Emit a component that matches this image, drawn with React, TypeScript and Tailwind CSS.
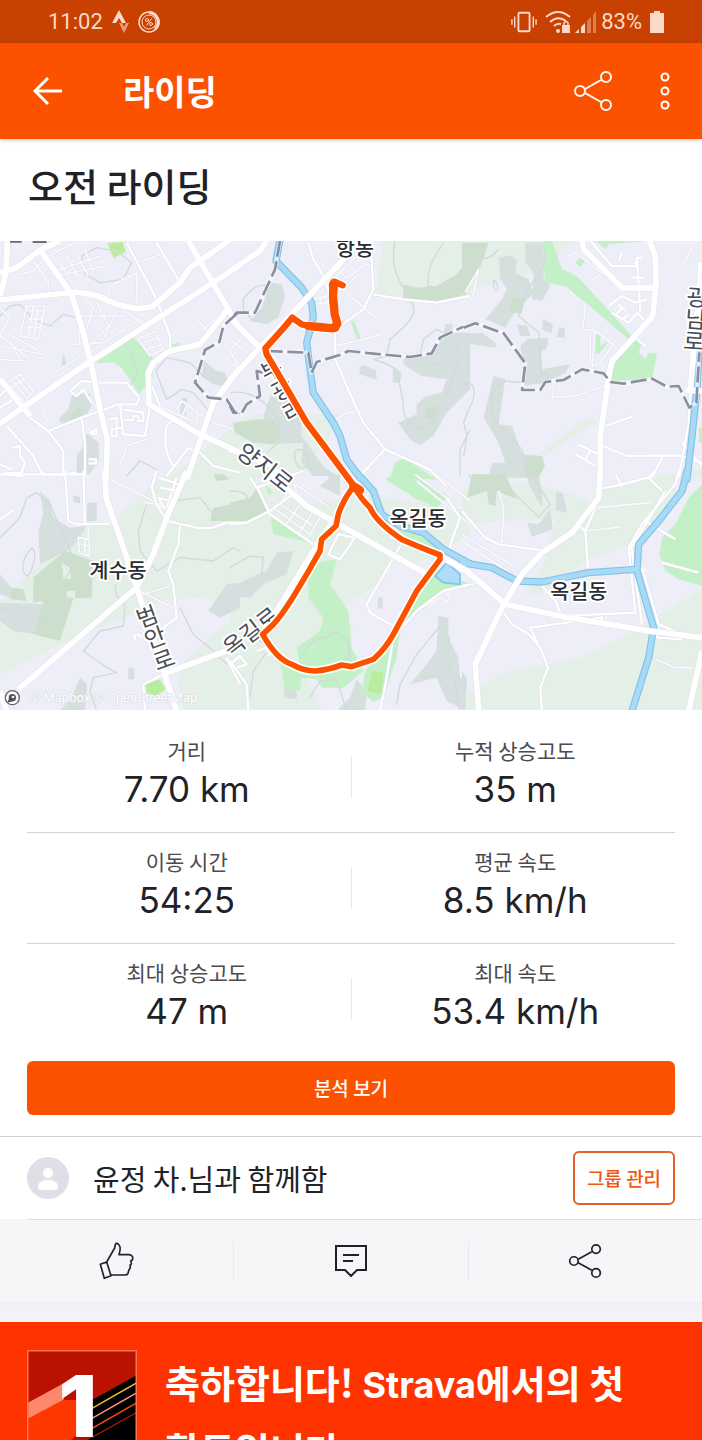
import React from 'react';

interface Sector {
  at: string;
  pale: string;
  woods: string;
  hills: string;
  clear?: string;
  parks: string;
  lime?: string;
  contours: string;
  streets: string;
  avenues: string;
  roads: string;
  water?: string;
  border?: string;
}

// Map tiles, three units per pixel
const sectors: Sector[] = [
  {
    at: 'translate(0 -15)',
    pale: 'M720 560L690 580L600 650L500 730H720Z',
    woods: 'M215 480L270 470L275 510L255 545L190 565L175 550L205 520ZM260 590L295 620L298 670L270 715L230 710L230 660L250 630ZM612 375L650 405L675 410L690 455L640 445L605 420ZM190 350L200 388L185 388ZM545 485L562 485L558 540L540 530Z',
    hills: 'M235 515L250 520L245 545L212 550L215 530Z',
    parks: 'M285 380L400 305L460 365L455 465L430 455L418 475L385 425L365 395L340 380ZM515 325L540 320L543 333L517 337Z',
    lime: 'M322 22L368 18L378 48L340 66Z',
    contours: 'M245 60L290 35L350 45L395 80L370 130L300 140L255 115ZM0 240L30 210L60 205L100 250L150 270L190 235L250 250M467 405L500 365L570 380L620 430M467 405L500 490L545 460L580 470L640 540M380 330L415 410L390 450M380 720L420 675L470 700',
    streets: 'M95 65L145 140V170M150 110L300 60M165 120L320 90M175 75L205 120M200 60L235 125M230 55L265 120M255 40L280 110M410 110L412 210M410 80L500 50M320 190L330 150L410 110M60 115L100 105L130 70L220 20M215 170L235 250L240 320M250 180L280 215L250 310M290 200L325 270L270 330M350 225L310 310M325 190L440 270M240 240L370 240M225 325L310 320L420 250M80 210L135 210L115 310L60 300ZM90 225H130M85 250H125M80 275H120M100 210L85 305M115 215L100 310M0 220L30 240L0 300M0 300L90 370M20 290L110 340M0 330L130 355M30 310L60 370M0 370L80 375M160 430L165 410L260 350M20 440L60 415L100 465L75 500ZM35 430L80 485M50 425L90 475M30 455L75 430M440 610L380 630L360 690M480 510L540 540M530 520L545 495L595 530L585 570M560 510L540 555M520 530L580 555M590 250L620 280M610 280L650 245M415 310L465 285L490 340L450 360ZM430 320L475 305M440 340L485 325M130 525L150 570M720 310L690 345L720 400M640 560L700 580',
    avenues: 'M380 20L470 190L510 300V345M470 20L540 140M0 480L20 460L40 490L0 515M20 460L0 440M210 465L245 435L290 440H380L418 485L410 505H355L245 545L145 585L90 545M210 465L230 480L250 460L275 500M145 585L190 645V720M60 520L0 570M20 570L100 660L130 720M245 550L255 620V720M270 590L290 580V595ZM265 670H288V682H265M0 715H190L230 710M360 505L370 595L435 600L450 510M370 520L430 530V555H415V540H400V552H375M330 550L350 545V600L335 602V580L370 575M35 635L60 630V660L75 680L65 710L10 712M0 685L35 700M455 450L480 510M500 570C490 620 500 660 520 690M500 570L520 550M560 635L600 650L640 690L720 710M500 720L565 635',
    roads: 'M0 192L230 168L290 178L350 205L410 218L455 213L540 140L570 95L690 12M0 562L265 380L720 88M120 42L215 175L250 290L275 390L300 520L322 610L318 730M0 110L50 95L120 42L180 15M22 10L18 110L0 180M565 15L720 280M680 225L640 275L600 325L510 345L460 380L445 410L447 505L590 590L720 650M720 395L640 500L560 730M0 430L90 540',
    border: 'M712 232L670 270L658 318L615 342L585 440L625 485L680 490L705 530L720 532',
  },
  {
    at: 'translate(690 -15)',
    pale: 'M460 15H720V180L680 190L440 175ZM90 535H330L300 600L200 725H0V560Z',
    woods: 'M120 140L155 145L165 180L145 245L110 265L60 255L95 215ZM388 392L400 387L438 403L440 432L390 415ZM488 395L515 410L510 440L488 440ZM645 265L665 262L672 290H720V460L650 530L610 600L570 628L540 610L505 560L560 535V505L590 480L635 470L650 430L575 420L520 385V365L600 350L640 300ZM125 470L170 480L210 530L215 600L280 690L320 720H250L215 680L220 620L120 625L100 540Z',
    hills: 'M520 145L560 155L620 150L680 115L720 60V150L700 190L620 200L520 190ZM10 560L85 550L130 550L155 590L130 625L70 620L15 590ZM595 510L620 512L612 550L588 545Z',
    parks: 'M495 680L520 665L620 730H480ZM362 258L372 253L395 315L385 318Z',
    contours: 'M495 15C480 80 500 130 540 190C570 230 540 260 480 310L470 360L430 370L460 380L500 400L520 500C510 560 580 590 600 570L650 480L690 350L660 300L620 280L580 310L570 360L620 385L680 370M640 20C600 80 590 110 595 150C640 160 690 150 720 120M40 190C60 160 90 140 110 150L120 200L70 255L40 220ZM0 470C60 460 120 500 150 560L145 620L110 650M195 645C220 630 240 660 230 690C210 710 190 680 195 645M720 580L690 640V720',
    streets: 'M345 130L400 90L420 85M350 150L380 120M350 170L430 240M370 190L390 200M250 190L310 175M255 205L310 195M270 185L275 215M285 180L290 210M315 330L400 310L450 295M300 560L350 530L380 525M0 380L40 400M0 310L50 350M310 130L380 60M320 90L350 130',
    avenues: 'M235 20L250 70L280 120L300 180L330 250M380 60L425 70L430 160L400 220L330 270L315 290L316 370L350 450L400 560L465 640L600 700L650 750M465 640L385 725M430 175L520 190L620 200L720 180',
    roads: 'M0 105L90 45L110 15M350 60L180 240L0 430M0 245L95 340M0 640L130 690L170 765',
    water: 'M150 10L138 75L215 155L245 200L250 245L230 320L240 400L250 470L310 560L330 600L350 670L390 725',
    border: 'M150 15L135 100L75 230L20 230L0 250M110 345L235 350L245 410L260 378L335 355L355 345L430 353L540 363L605 352L630 305L700 272M100 410L80 405L90 480L50 505L35 532L10 530L0 510',
  },
  {
    at: 'translate(1386 -15)',
    pale: 'M0 15H330L290 50L280 140L200 110L0 170ZM130 725L250 640L350 560L390 545L410 555L200 690L160 725ZM560 725L720 700V725Z',
    woods: 'M110 65L150 58L165 75L160 110L200 130L215 170L150 240L130 275L70 250L120 190L135 160L115 130ZM190 20H245L245 130L265 150L240 195L210 190L215 110L190 80ZM163 265L195 270L205 300L175 300ZM243 250L273 265L268 292L240 280ZM290 275H308V305L285 302ZM195 310L258 305L255 335L235 350L240 400L325 385L310 410L250 440L185 450L190 400L175 330ZM0 295L60 290L105 325L100 335L0 320ZM95 420L130 430L110 565L150 570L180 655L240 660L248 690L230 725H80L90 680L130 680L110 620L65 545L85 460ZM0 370L15 390L10 450L0 460Z',
    hills: 'M0 20H80L60 80L30 140L0 165ZM150 185L190 183L178 235L143 228ZM190 660L240 660L248 690L230 725H190Z',
    parks: 'M245 15H270L300 100L345 120L510 300L540 320L530 350L550 370L560 350L585 353L570 430L450 435V390L500 310L330 165L310 150L250 140L245 80ZM340 80L355 65L368 78L352 95ZM400 15H550L440 25L430 38ZM402 290L415 295V330L440 315L410 355L400 350ZM710 575H720V620H710Z',
    contours: 'M250 40L245 90L190 170L170 240L230 290L235 350L240 420L220 440M95 550L90 470L130 435L180 440M95 550L180 640L190 700M0 440C50 430 40 490 20 520L5 560L15 600L5 660M0 90L90 60L110 40M95 135Q105 130 108 160Q98 170 95 150Z',
    streets: 'M315 60L390 135L420 110M315 60L340 50L460 140M320 165L370 210L362 280L400 285L390 390L410 385L450 330M400 285L460 330M275 455L270 485L340 480L440 445M10 170L50 100L30 190L0 180M665 80L700 20M385 290V380',
    avenues: 'M385 15L450 90H520L525 65H540M525 65L535 230M480 50L470 75M510 125H545M440 210L480 180L520 200L555 190M450 230L500 260L525 230L560 265M470 205L490 225M460 240L480 215M480 250L500 235M520 305L550 330M430 570L515 540M420 628L495 660L650 658M350 625L410 655M340 655L400 690M370 670L385 645M660 620L720 690M640 655L720 680M605 655L570 725M685 460L680 560L650 725',
    roads: 'M360 10L365 40L480 155L575 157M560 10L580 60L582 150L572 240L510 310L450 375L440 420L415 600L415 725M718 80L685 460M670 462L720 465',
    water: 'M712 330L705 460L690 600L675 730',
    border: 'M5 275L40 262L125 292L190 382L180 462L235 462L250 438L305 432L360 400L425 412L445 438L485 443L570 428L615 452L650 450L682 515L703 500L712 350',
  },
  {
    at: 'translate(0 690)',
    pale: 'M0 390L100 300L130 280L260 170L330 160L470 30L500 10H720V400L600 380L500 385L400 430L180 520L0 610ZM720 430L640 490L560 560L530 620L550 720H720Z',
    woods: 'M120 60L150 90L160 140L210 170L260 165L240 200L210 235L120 280L115 180L130 130ZM0 395L140 400L130 440L110 490L40 480L0 450ZM218 72L240 78V98L222 92ZM262 95H290V150H260ZM385 592H402V625H385ZM0 310L35 350L30 380L0 370ZM240 620L262 640L255 720H180L215 680ZM680 340L720 335V410L660 440L625 420Z',
    hills: 'M195 240L280 270L275 380L220 382L180 510L100 490L130 400L125 390L100 395V320ZM640 110L720 95V150H630ZM640 10H670L690 25L650 30ZM35 350L70 355L80 390L30 385ZM155 330L190 360L175 440L145 400Z',
    clear: 'M185 275L210 290L213 325L190 322ZM200 360H225V382L200 378Z',
    parks: '',
    lime: 'M435 640L480 625L497 655L470 675L440 665Z',
    contours: 'M0 200L60 140L80 80L110 65L150 100L180 170L220 260L210 300L175 360L170 430L100 450L0 410M95 232C115 240 100 290 85 315C60 310 65 260 95 232ZM440 100L415 180L420 240L470 300L540 260L640 270L700 230L720 240M345 340L350 375L375 405L370 465L300 480L250 540L320 590L350 605L280 620L270 660L290 720M520 90L600 80L640 130L720 120M540 410L580 490L640 540L680 580',
    streets: 'M235 200L268 205V255L238 245ZM245 220L265 225M255 200V245M265 160V200M415 375L510 345M420 360L520 410M320 20L480 100L490 140M435 95L480 100',
    avenues: 'M0 145L40 118M120 0L135 10H250M195 0L205 150L230 160L330 158M250 0L255 160M500 150L600 172L640 170L680 155H720M540 165L535 220L505 300L520 340L530 440L490 470M470 0L455 50L470 100L500 150M500 110L530 20M475 20L540 40M480 50L530 60M475 80L510 90M475 80L495 115M425 500L415 490L402 495L408 510M500 605L430 640L435 720M680 560L720 640M0 10L70 15',
    roads: 'M315 0L318 80L370 230L410 350L530 720M560 0L500 140L460 250L410 350L55 655M500 605L720 525M0 660L20 720',
  },
  {
    at: 'translate(690 690)',
    pale: 'M0 10H60L100 40L240 100L400 70L720 120V190L560 280L500 255L440 340L340 410L370 480L200 560L280 720H0V230Z',
    woods: 'M140 245L190 240L170 310L100 340L60 380L0 375V350L60 320L110 300ZM272 10H330V75L270 45L300 20ZM380 625L410 660L405 720H320L360 680ZM160 645L200 660V685L165 680ZM445 378L458 380V415L443 410ZM625 435L655 440V500L685 560L690 620L710 630L700 715L650 690L620 620L540 640L590 580L620 540Z',
    hills: 'M0 95L60 80L80 50L110 120L60 150L0 150Z',
    parks: 'M495 10H540L655 75L620 110L560 85L465 25ZM120 130L200 190L250 215L130 190ZM260 275L320 265L300 340L355 420L365 530L400 600L340 650L275 650L260 625L215 620L210 660L165 650L150 570L210 590L200 530L270 480L280 440L235 380V320ZM490 500L510 480L500 560L460 680L430 692L395 665L405 600ZM610 290L720 340L640 365L520 460ZM500 175L580 185L640 250L560 225ZM105 40L130 65L115 70Z',
    lime: 'M425 600L460 605L455 670L412 660Z',
    contours: 'M0 290L60 255L100 260L95 310L50 350L0 370M0 60Q60 60 50 90Q20 120 0 115M210 560L250 510L320 485L355 510L360 560L300 590M240 680L270 630L320 625L350 720M500 700L510 640L560 550L630 465L660 500L640 560L670 610L690 720M0 520L60 490L120 530L70 600L60 680',
    streets: 'M130 120L170 70M165 165L215 95M205 190L250 120M235 200L275 130M150 100L250 165M130 110L240 190M555 10L650 80M620 10L720 90M560 30L720 160M640 360L660 375L650 395L630 380L560 420M200 60L190 40L220 55L300 110',
    avenues: 'M0 160L50 155L120 120L200 60M80 45L120 130L250 220M60 20L80 50L220 0M295 250L325 190L375 200L330 265ZM510 225L410 400L420 425L500 470M720 340L640 360L560 420L490 500L470 620L450 720M650 80L690 140L655 240M0 570L50 640L55 720M0 580L30 555L50 580L20 590M80 540L110 530L120 555',
    roads: 'M110 0L230 105L590 310M620 250L720 305M245 250L265 215L310 150M100 485L250 240',
    water: 'M375 0L430 60L455 130L510 165L580 185L640 235L720 278',
  },
  {
    at: 'translate(1386 690)',
    pale: 'M0 60L200 30L390 90L400 60L640 10V90L530 210L370 270L230 370H190L240 290L280 150L270 140L0 160ZM0 680L140 600L360 560L500 490L720 350V720H0Z',
    woods: 'M195 10H230L240 70V110L200 40ZM282 65H302L315 125L282 118ZM195 155L230 160L265 115L272 175L210 197ZM0 600L15 625L10 720H0Z',
    hills: 'M30 10H130L165 85L105 60L100 105L80 100L75 60L15 80Z',
    parks: 'M720 40L680 80L640 160L600 200L592 250L610 300L650 325L720 345Z',
    contours: 'M20 10L50 60L100 40L130 30L150 60L230 138L265 100L220 30L200 10',
    streets: 'M110 60L125 110L120 215M0 190L160 290M0 210L150 310M405 110L565 95M370 180L475 168M0 345L60 335M580 565L640 590H690',
    avenues: 'M0 120L70 200L110 220L240 238M400 55L460 45L560 20L600 60M460 10L480 45M350 165L370 180L380 320M560 20L580 0M370 180L400 110V80M650 0L640 40L540 160L500 230L520 425L300 435M610 60L545 170L508 230L540 460M540 290L590 460L660 490M550 150L640 205M480 310L550 295M590 470L570 490L590 500L660 505M600 275L710 305M240 345L280 390L305 450M125 425L150 460L200 490L235 530L258 590L235 650L240 720M420 440L205 470L230 525M420 435V465',
    roads: 'M0 290L50 330L130 400L320 440L560 480L720 500M415 0L410 80L330 185L240 245L180 310L125 400L40 580L50 720M720 540L680 720',
    water: 'M675 0L660 60L590 150L530 220L525 300L575 470L560 560L510 720M0 275L90 290L165 330L240 333L380 305L525 295',
  },
];

const routeNorth = 'M1028 133L1005 123L996 130L998 185L1004 220L1013 247L1008 263L960 261L905 250L877 230L850 262L796 322L800 340L850 425L920 545L1062 735';
const routeLoop = 'M1062 735Q1030 775 1015 820L1008 855L965 895L960 930L920 1000L875 1075Q840 1130 820 1150L788 1180Q830 1255 875 1270Q910 1290 945 1290Q985 1287 1025 1272L1055 1277L1120 1255Q1155 1225 1180 1180L1250 1050L1320 955V942Q1250 915 1205 895Q1130 845 1110 800Q1080 770 1062 735';

const placeLabels = [
  { text: '항동', x: 1065, y: 44 },
  { text: '계수동', x: 354, y: 1010 },
  { text: '옥길동', x: 1254, y: 856 },
  { text: '옥길동', x: 1736, y: 1075 },
];

const roadLabels = [
  { text: '양지로', x: 780, y: 700, angle: 38 },
  { text: '옥길로', x: 768, y: 1192, angle: -38 },
  { text: '부', x: 826, y: 408, angle: -28 },
  { text: '광', x: 858, y: 468, angle: -28 },
  { text: '리', x: 892, y: 532, angle: -28 },
  { text: '광', x: 2090, y: 194, angle: 4 },
  { text: '남', x: 2086, y: 260, angle: 4 },
  { text: '로', x: 2080, y: 326, angle: 4 },
  { text: '범', x: 450, y: 1150, angle: -20 },
  { text: '안', x: 474, y: 1213, angle: -20 },
  { text: '로', x: 500, y: 1280, angle: -20 },
];

const Layer = ({ name, ...rest }: { name: Exclude<keyof Sector, 'at'> } & React.SVGProps<SVGGElement>) => (
  <g {...rest}>
    {sectors.map((s) => (s[name] ? <path key={s.at} d={s[name]} transform={s.at} /> : null))}
  </g>
);

const RouteMap = () => (
  <svg
    viewBox="0 0 2106 1407"
    className="block w-full bg-[#eeeef8] font-['Noto_Sans_CJK_KR',sans-serif]"
    role="img"
    aria-label="라이딩 경로"
    fill="none"
    strokeLinejoin="round"
  >
    <Layer name="pale" fill="#e4efe7" />
    <Layer name="woods" fill="#d5dfde" />
    <Layer name="hills" fill="#ccdfcd" />
    <Layer name="clear" fill="#e4efe7" />
    <Layer name="parks" fill="#c4f0c8" />
    <Layer name="lime" fill="#b9ed9e" />
    <Layer name="contours" stroke="#d4d8dc" strokeWidth="4" />
    <Layer name="streets" stroke="#dfe0ea" strokeWidth="8" />
    <Layer name="streets" stroke="#fafaff" strokeWidth="5" />
    <Layer name="avenues" stroke="#dfe0ea" strokeWidth="10" />
    <Layer name="avenues" stroke="#fff" strokeWidth="7" />
    <Layer name="water" stroke="#82c3e8" strokeWidth="22" strokeLinecap="round" />
    <Layer name="water" stroke="#a9daf5" strokeWidth="15" strokeLinecap="round" />
    <path d="M1305 1005L1340 965L1380 1000V1030L1330 1025Z" fill="#b0dcf7" stroke="#82c3e8" strokeWidth="5" />
    <Layer name="roads" stroke="#e2e2ee" strokeWidth="20" />
    <Layer name="roads" stroke="#fff" strokeWidth="17" />
    <Layer name="border" stroke="#fff" strokeOpacity=".6" strokeWidth="12" />
    <Layer name="border" stroke="#8b8fa0" strokeWidth="8" strokeDasharray="48 14" />

    <g fill="#4a4d55" stroke="#fff" strokeWidth="12" paintOrder="stroke" fontSize="69" textAnchor="middle">
      {roadLabels.map((l) => (
        <text key={`${l.text}${l.x}`} transform={`translate(${l.x} ${l.y}) rotate(${l.angle})`}>{l.text}</text>
      ))}
    </g>

    <g strokeLinecap="round">
      <path d={routeNorth} stroke="#fff" strokeWidth="28" />
      <path d={routeLoop} stroke="#fff" strokeWidth="27" />
      <path d={routeNorth} stroke="#fc5200" strokeWidth="19" />
      <path d={routeLoop} stroke="#fc5200" strokeWidth="17" />
      <path d="M1002 125L999 165L1004 220L1012 248L1000 262L925 255M1060 735L1080 748" stroke="#fc5200" strokeWidth="25" />
    </g>

    <g fill="#2b2d33" stroke="#fff" strokeWidth="12" paintOrder="stroke" fontSize="62" fontWeight="500" textAnchor="middle">
      {placeLabels.map((l) => (
        <text key={l.x} x={l.x} y={l.y}>{l.text}</text>
      ))}
    </g>
    <path d="M30 2H65M98 3H140" stroke="#6c6f76" strokeWidth="6" />

    <circle cx="37" cy="1370" r="21" fill="#fff" stroke="#62666e" strokeWidth="4" />
    <circle cx="37" cy="1370" r="11" fill="#4c5057" />
    <path d="M22 1385L30 1366L40 1380Z" fill="#4c5057" />
    <circle cx="39" cy="1368" r="4" fill="#fff" />
    <text x="90" y="1382" className="font-[Roboto,sans-serif]" fontSize="39" fill="#fff" stroke="#d5d8de" strokeWidth="3" paintOrder="stroke">
      © Mapbox © OpenStreetMap
    </text>
  </svg>
);

const ShareIcon = ({ className }: { className: string }) => (
  <svg viewBox="0 0 40 42" className={className} fill="none" stroke="currentColor" strokeWidth="2">
    <circle cx="7" cy="21" r="5" />
    <circle cx="33" cy="7" r="5" />
    <circle cx="33" cy="35" r="5" />
    <path d="M12 19L28 10M12 23L28 32" />
  </svg>
);

const StatusBar = () => (
  <div className="flex h-[43px] items-center justify-between bg-[#c94100] pr-[38px] pl-12 font-[Roboto,sans-serif] text-[22px] text-[#fbd9c9]">
    <div className="flex items-center gap-2">
      <span>11:02</span>
      <svg viewBox="0 0 18 24" className="h-6 w-[18px]" fill="currentColor">
        <path d="M8 0L15 13H11L8 8L5 13H1Z" />
        <path d="M8 13H11L13 17L15 13H18L13 23Z" opacity=".6" />
      </svg>
      <svg viewBox="0 0 24 24" className="size-6" fill="none" stroke="currentColor">
        <circle cx="12" cy="12" r="10" strokeWidth="1.5" />
        <path d="M12 2.5A9.500 9.500 0 0 1 18 19" strokeWidth="3" />
        <circle cx="12" cy="12" r="7" strokeWidth="1" />
        <path d="M14.500 8.500L9.500 15.500" strokeWidth="1" />
        <circle cx="10" cy="10" r="1.500" />
        <circle cx="14" cy="14" r="1.500" />
      </svg>
    </div>
    <div className="flex items-center gap-1">
      <svg viewBox="0 0 28 24" className="h-6 w-[26px]" fill="none" stroke="currentColor" strokeWidth="2">
        <rect x="8" y="2" width="12" height="20" rx="1" />
        <path d="M4 6V18M24 6V18M1 9V15M27 9V15" strokeWidth="1.500" />
      </svg>
      <svg viewBox="0 0 26 24" className="ml-1 h-6 w-[26px]" fill="none" stroke="currentColor" strokeWidth="2">
        <path d="M1 7Q13 -3 25 7M5 12Q13 5 21 11M9 16Q12 13 16 14" />
        <circle cx="13" cy="21" r="2" fill="currentColor" stroke="none" />
        <rect x="17" y="15" width="8" height="8" fill="currentColor" stroke="none" />
        <path d="M19 16V13Q21 10 23 13V16" strokeWidth="1.500" />
      </svg>
      <svg viewBox="0 0 22 22" className="h-[22px] w-[22px]" fill="currentColor">
        <path d="M0 22L4 18V22ZM6 16L10 12V22H6Z" />
        <path d="M12 10L16 6V22H12ZM18 4L21 0V22H18Z" opacity=".4" />
      </svg>
      <span>83%</span>
      <svg viewBox="0 0 14 22" className="ml-1 h-[22px] w-[14px]" fill="currentColor">
        <path d="M0 2H4V0H10V2H14V22H0Z" />
      </svg>
    </div>
  </div>
);

const stats = [
  [{ label: '거리', value: '7.70 km' }, { label: '누적 상승고도', value: '35 m' }],
  [{ label: '이동 시간', value: '54:25' }, { label: '평균 속도', value: '8.5 km/h' }],
  [{ label: '최대 상승고도', value: '47 m' }, { label: '최대 속도', value: '53.4 km/h' }],
];

const Stat = ({ label, value }: { label: string; value: string }) => (
  <div className="flex-1 text-center first:pr-1 last:pl-1">
    <dt className="text-[21px] leading-8 text-[#4b4b50]">{label}</dt>
    <dd className="font-[Inter,sans-serif] text-[35px] leading-[46px] text-[#222226]">{value}</dd>
  </div>
);

export default function App() {
  return (
    <div className="flex h-screen flex-col overflow-hidden bg-white font-['Noto_Sans_CJK_KR',sans-serif] text-[#222226] *:shrink-0">
      <StatusBar />

      <header className="relative flex h-24 items-center bg-[#fc5200] pr-[25px] pl-[33px] text-white shadow-[0_1px_4px_rgba(0,0,0,0.25)]">
        <button aria-label="뒤로">
          <svg viewBox="0 0 30 30" className="size-[30px]" fill="none" stroke="currentColor" strokeWidth="3">
            <path d="M15 2L2 15L15 28M2 15H29" />
          </svg>
        </button>
        <h1 className="ml-[60px] flex-1 text-[34px] leading-[48px] font-bold">라이딩</h1>
        <button aria-label="공유">
          <ShareIcon className="h-[42px] w-10" />
        </button>
        <button aria-label="더 보기" className="ml-10">
          <svg viewBox="0 0 24 42" className="h-[42px] w-6" fill="none" stroke="currentColor" strokeWidth="2">
            <circle cx="12" cy="7" r="3.500" />
            <circle cx="12" cy="21" r="3.500" />
            <circle cx="12" cy="35" r="3.500" />
          </svg>
        </button>
      </header>

      <h2 className="px-7 pt-[18px] pb-7 text-[38px] leading-[56px] font-medium">오전 라이딩</h2>

      <RouteMap />

      <dl className="px-[27px] pt-3">
        {stats.map(([left, right]) => (
          <div key={left.label} className="flex items-center border-[#d4d4d8] pt-3 pb-5 not-last:border-b">
            <Stat {...left} />
            <div className="mt-2 h-[42px] w-px bg-[#e8e8ec]" />
            <Stat {...right} />
          </div>
        ))}
      </dl>

      <div className="border-b border-[#d0d0d4] px-[27px] pt-[7px] pb-[21px]">
        <button className="h-[54px] w-full rounded-md bg-[#fc5200] text-[19px] font-medium text-white">분석 보기</button>
      </div>

      <div className="flex h-[82px] items-center px-[27px]">
        <svg viewBox="0 0 42 42" className="size-[42px]" fill="#fff">
          <circle cx="21" cy="21" r="21" fill="#dfdfe8" />
          <circle cx="21" cy="16" r="5" />
          <path d="M11 30Q11 23 21 23Q31 23 31 30Q31 33 28 33H14Q11 33 11 30Z" />
        </svg>
        <p className="ml-6 flex-1 text-[29px] leading-10">윤정 차.님과 함께함</p>
        <button className="h-[54px] w-[102px] rounded-md border-2 border-[#e3602a] text-[19px] font-medium text-[#f0570f]">그룹 관리</button>
      </div>

      <div className="bg-[#f6f6f9]">
        <div className="ml-[27px] h-px bg-[#dcdce0]" />
        <div className="flex h-[82px] items-center divide-x divide-[#e8e8ee]">
          <button aria-label="좋아요" className="flex h-10 flex-1 items-center justify-center">
            <svg viewBox="295 332 111 120" className="h-10 w-[37px]" fill="none" stroke="currentColor" strokeWidth="5" strokeLinejoin="round">
              <path d="M302 402L321 395L334 436L314 444Z" />
              <path d="M321 395L345 353L347 342Q351 335 358 344Q365 351 358 373H388Q403 375 398 389L393 392Q398 402 391 405Q394 414 388 418L385 429Q383 434 375 434H334" />
            </svg>
          </button>
          <button aria-label="댓글" className="flex h-10 flex-1 items-center justify-center">
            <svg viewBox="0 0 32 32" className="size-8" fill="none" stroke="currentColor" strokeWidth="2">
              <path d="M1 1H31V25H22L16 31L10 25H1ZM8 10H24M8 16H18" />
            </svg>
          </button>
          <button aria-label="공유" className="flex h-10 flex-1 items-center justify-center">
            <ShareIcon className="h-9 w-[34px]" />
          </button>
        </div>
        <div className="h-5 bg-linear-to-b from-[#efeff5] to-[#f5f5f9]" />
      </div>

      <section className="flex gap-7 bg-[#ff3300] px-[27px] pt-7 pb-7 text-white">
        <svg viewBox="0 0 330 330" className="size-[110px] shrink-0">
          <rect width="330" height="330" fill="#ff3700" />
          <path d="M0 0H330V75L150 175L0 160Z" fill="#ba1100" />
          <path d="M330 75L140 180V330H330Z" fill="#000" />
          <path d="M0 160L110 100V150L0 208Z" fill="#ff876b" />
          <path d="M0 208L110 150H155V255L110 280L0 330Z" fill="#ff3700" />
          <path d="M130 270L155 258H200L140 300V330H0Z" fill="#ba1100" />
          <path d="M195 175L330 98" stroke="#f5c02d" strokeWidth="4" />
          <path d="M195 205L330 128" stroke="#ff957c" strokeWidth="4" />
          <path d="M195 235L330 158" stroke="#ff4a1c" strokeWidth="4" />
          <path d="M195 262L330 187" stroke="#9c1a08" strokeWidth="4" />
          <text x="152" y="261" textAnchor="middle" fontSize="254" fontWeight="900" fill="#fff" className="font-[Inter,sans-serif]">1</text>
          <rect x="2" y="2" width="326" height="326" fill="none" stroke="#ff7352" strokeWidth="5" />
        </svg>
        <h3 className="text-[38px] leading-[64px] font-bold">
          축하합니다! <span className="font-[Inter,sans-serif] text-[36px]">Strava</span>에서의 첫<br />활동입니다.
        </h3>
      </section>
    </div>
  );
}
